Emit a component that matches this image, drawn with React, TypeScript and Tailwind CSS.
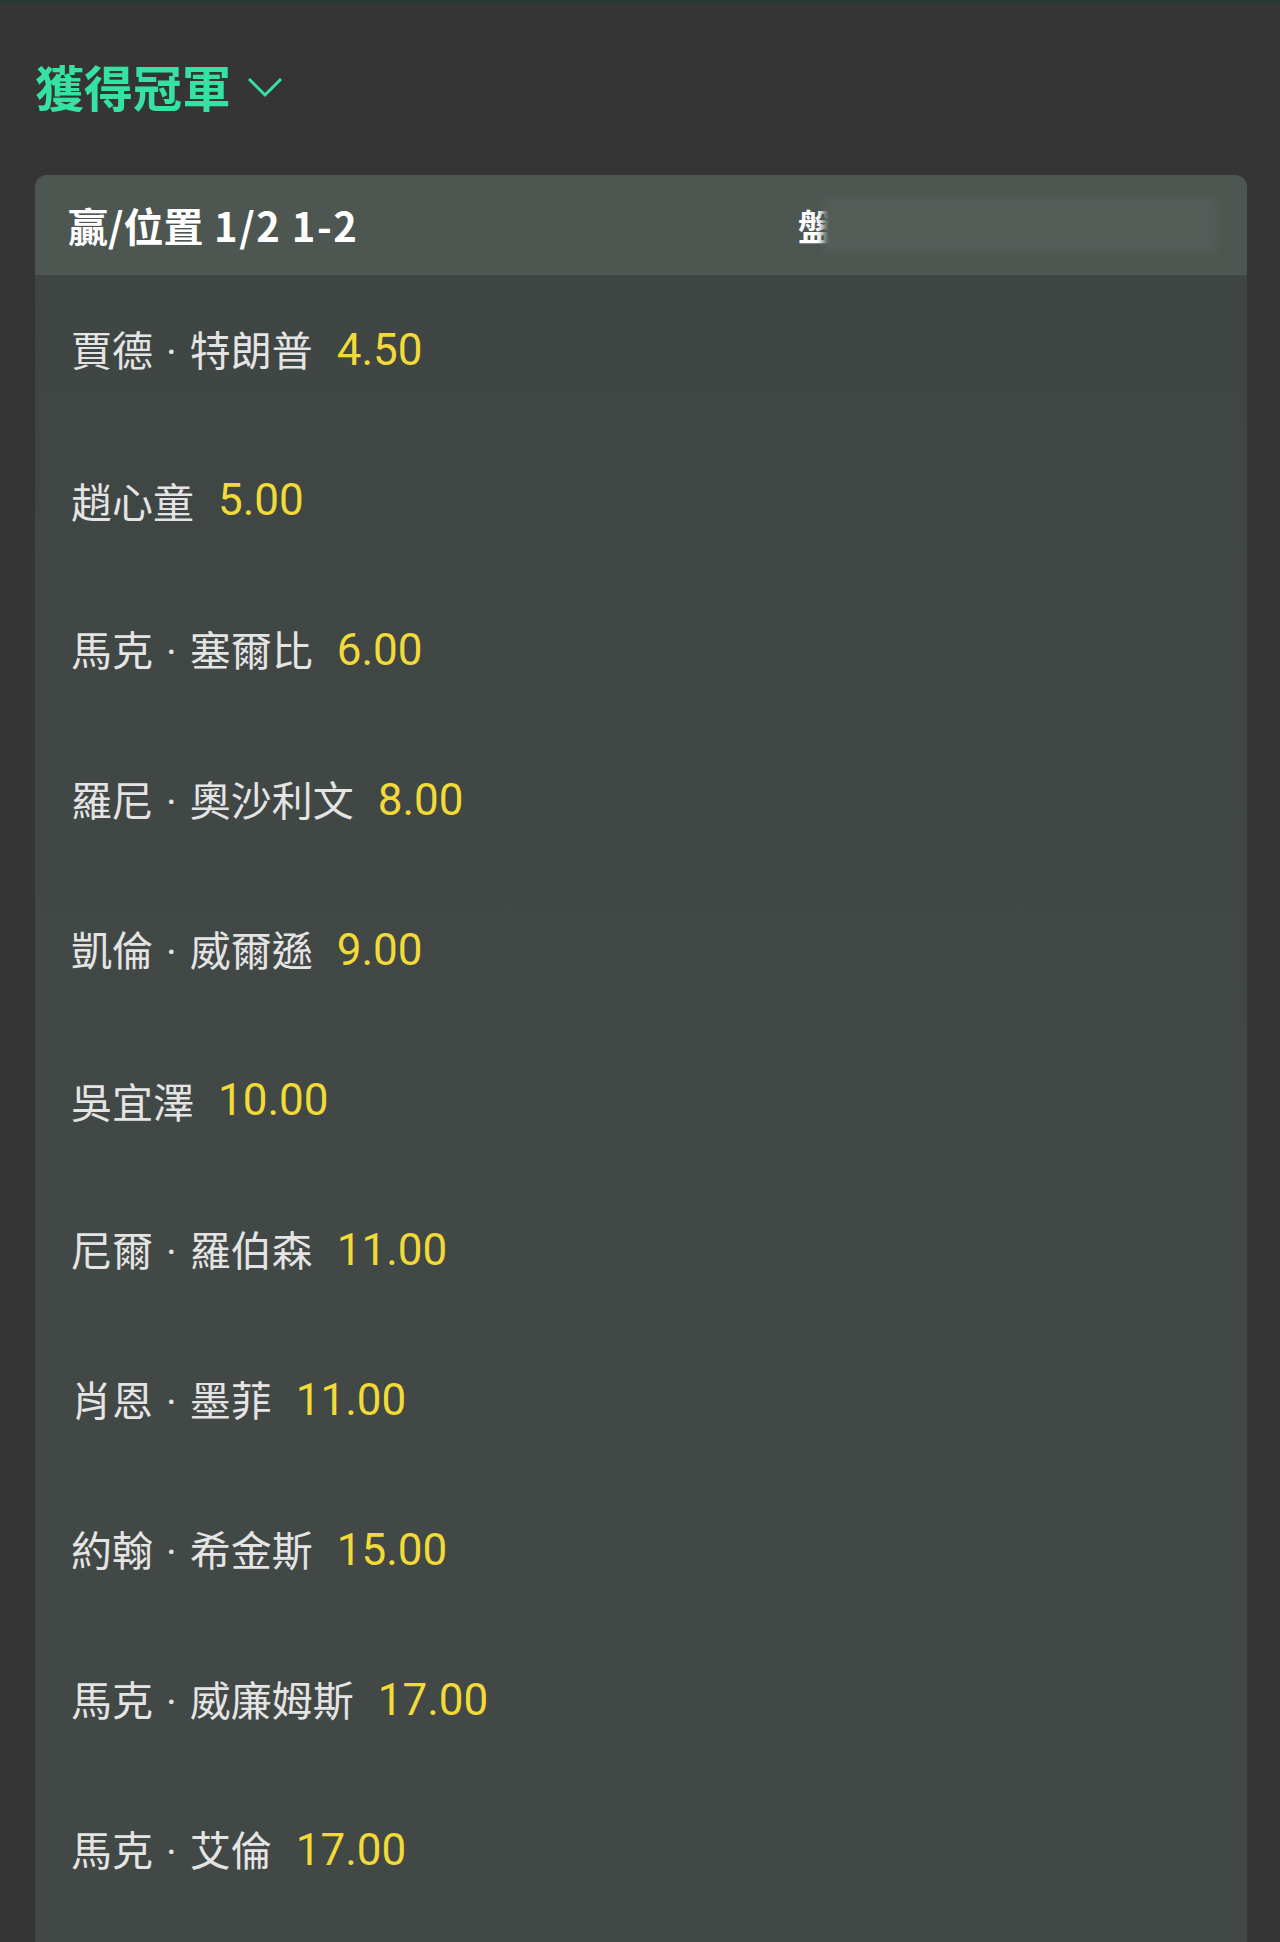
import React from 'react'

const runners = [
  { first: '賈德', last: '特朗普', odds: '4.50' },
  { first: '趙心童', odds: '5.00' },
  { first: '馬克', last: '塞爾比', odds: '6.00' },
  { first: '羅尼', last: '奧沙利文', odds: '8.00' },
  { first: '凱倫', last: '威爾遜', odds: '9.00' },
  { first: '吳宜澤', odds: '10.00' },
  { first: '尼爾', last: '羅伯森', odds: '11.00' },
  { first: '肖恩', last: '墨菲', odds: '11.00' },
  { first: '約翰', last: '希金斯', odds: '15.00' },
  { first: '馬克', last: '威廉姆斯', odds: '17.00' },
  { first: '馬克', last: '艾倫', odds: '17.00' },
]

const latin = { fontFamily: 'Roboto, "Noto Sans", sans-serif' }

function App() {
  return (
    <main
      className="min-h-[1942px] bg-[#353535] overflow-hidden"
      style={{ fontFamily: '"Noto Sans CJK TC", "Noto Sans", sans-serif' }}
    >
      <div className="h-[4px] bg-[#263a31]" />
      <div className="pl-[35px] pr-[33px]">
        {/* market title */}
        <div className="h-[162px] flex items-center gap-x-[16px]">
          <h2 className="text-[49px] font-bold leading-none text-[#36e2a3]">獲得冠軍</h2>
          <svg width="36" height="24" viewBox="0 0 36 24" className="mt-[4px]">
            <polyline points="2,4 18,20 34,4" fill="none" stroke="#36e2a3" strokeWidth="3" />
          </svg>
        </div>

        <div className="mt-[9px] rounded-t-[12px] overflow-hidden bg-gradient-to-b from-[#3e4542] via-[#414845] to-[#424845]">
          <div className="h-[100px] bg-[#4d5651] flex items-center pl-[33px] pr-[30px]">
            <span className="text-[40px] font-bold text-white leading-none whitespace-pre">
              贏/位置<span className="tracking-[1.5px]"> 1/2 1-2</span>
            </span>
            <div className="ml-auto w-[419px] relative flex items-center">
              <span className="text-[36px] font-bold text-white leading-none whitespace-nowrap">盤口</span>
              {/* blurred-out part of the header */}
              <div className="absolute left-[25px] right-0 top-[-10px] bottom-[-10px] bg-[#555c58] blur-[3px]" />
            </div>
          </div>

          <ul>
            {runners.map((r, i) => (
              <li key={i} className="h-[150px] flex items-center pl-[36px]">
                <span className="text-[41px] text-[#e4e4e4] leading-none whitespace-nowrap">
                  {r.first}
                  {r.last && (
                    <>
                      <span className="mx-[13px]" style={latin}>·</span>
                      {r.last}
                    </>
                  )}
                </span>
                <span className="ml-[24px] text-[44px] text-[#f2da38] leading-none" style={latin}>
                  {r.odds}
                </span>
              </li>
            ))}
          </ul>
          <div className="h-[60px]" />
        </div>
      </div>
    </main>
  )
}

export default App
